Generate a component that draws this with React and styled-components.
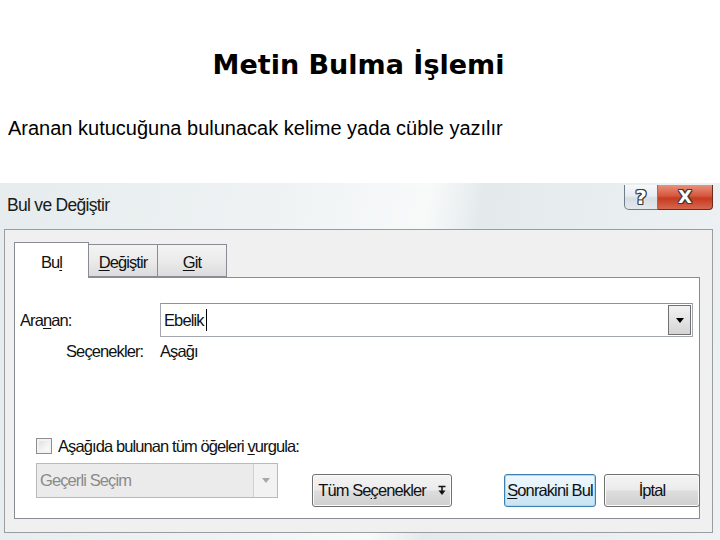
import React from 'react';
import styled, { createGlobalStyle } from 'styled-components';

const GlobalStyle = createGlobalStyle`
  html, body {
    margin: 0;
    padding: 0;
    background: #ffffff;
  }
  body {
    width: 720px;
    height: 540px;
    overflow: hidden;
    font-family: "Liberation Sans", Arial, sans-serif;
  }
`;

const ui = `"Liberation Sans", Arial, sans-serif`;

//Slide
const Slide = styled.div`
  width: 720px;
  height: 540px;
  display: flex;
  flex-direction: column;
`;

const Heading = styled.header`
  height: 183px;
  display: flex;
  flex-direction: column;
`;

const Title = styled.h1`
  margin: 50px 0 0;
  padding-right: 3px;
  font: 700 27px/30px "DejaVu Sans", sans-serif;
  text-align: center;
  color: #000;
`;

const Lead = styled.p`
  margin: 36px 0 0;
  padding-left: 8px;
  font: 400 20px/24px "Liberation Sans", Arial, sans-serif;
  color: #000;
`;

//Dialog window
const Window = styled.section`
  flex: 1;
  display: flex;
  flex-direction: column;
  font-family: ${ui};
  font-size: 16.5px;
  letter-spacing: -0.9px;
  white-space: nowrap;
  color: #111;
  background: linear-gradient(100deg, #e6ecee 0%, #eef2f3 35%, #f8fafa 55%, #e4eaec 62%, #eef2f4 100%);
`;

const TitleBar = styled.div`
  height: 46px;
  display: flex;
  justify-content: space-between;
  align-items: flex-start;
`;

const Caption = styled.span`
  margin: 11px 0 0 7px;
  font-size: 17.5px;
  letter-spacing: -0.7px;
  line-height: 22px;
  color: #1a1a1a;
`;

const CaptionButtons = styled.div`
  display: flex;
  margin: 2px 7px 0 0;
`;

const CaptionButton = styled.div`
  width: ${p => p.$w}px;
  height: 25px;
  box-sizing: border-box;
  display: flex;
  align-items: center;
  justify-content: center;
  padding-bottom: 1px;
  font: 700 ${p => (p.$close ? 18 : 20)}px/1 "DejaVu Sans", sans-serif;
  letter-spacing: 0;
  color: #ffffff;
  text-shadow:
    1px 0 0 #3a3a3a, -1px 0 0 #3a3a3a, 0 1px 0 #3a3a3a, 0 -1px 0 #3a3a3a,
    1px 1px 0 #3a3a3a, -1px -1px 0 #3a3a3a, 1px -1px 0 #3a3a3a, -1px 1px 0 #3a3a3a;
  border: 1px solid ${p => (p.$close ? '#6e2a1c' : '#6f7c89')};
  border-top: none;
  border-radius: ${p => (p.$close ? '0 0 4px 0' : '0 0 0 5px')};
  background: ${p =>
    p.$close
      ? 'linear-gradient(180deg, #e9917c 0%, #d5583f 45%, #c73a20 55%, #d4684f 100%)'
      : 'linear-gradient(180deg, #f6f8fa 0%, #e7ecf0 45%, #d6dde3 55%, #e3e8ec 100%)'};
  ${p => (p.$close ? 'border-left: none;' : '')}
`;

const Frame = styled.div`
  margin: 0 7px 0 4px;
  height: 304px;
  box-sizing: border-box;
  border: 1px solid #9a9da0;
  background: #f0f0f0;
  padding: 12px 12px 13px 9px;
  display: flex;
  flex-direction: column;
`;

const TabStrip = styled.div`
  height: 35px;
  display: flex;
  align-items: flex-end;
  position: relative;
  z-index: 1;
`;

const Tab = styled.div`
  box-sizing: border-box;
  width: ${p => p.$w}px;
  height: ${p => (p.$active ? 36 : 33)}px;
  margin-left: ${p => (p.$first ? 0 : -1)}px;
  margin-bottom: ${p => (p.$active ? -1 : 0)}px;
  border: 1px solid #898c95;
  border-bottom: ${p => (p.$active ? 'none' : '1px solid #898c95')};
  background: ${p => (p.$active ? '#ffffff' : 'linear-gradient(180deg, #f3f3f3 0%, #ebebeb 50%, #dcdcdc 100%)')};
  display: flex;
  justify-content: center;
  align-items: center;
  padding-top: ${p => (p.$active ? 4 : 3)}px;
  z-index: ${p => (p.$active ? 2 : 1)};
`;

const Panel = styled.div`
  flex: 1;
  box-sizing: border-box;
  border: 1px solid #898c95;
  background: #ffffff;
  padding: 25px 6px 11px 5px;
  display: flex;
  flex-direction: column;
`;

const FieldGrid = styled.div`
  display: grid;
  grid-template-columns: 140px 1fr;
  grid-template-rows: 34px 22px;
  row-gap: 3px;
  align-items: center;
`;

const Label = styled.span`
  padding-left: ${p => p.$indent || 0}px;
`;

const ComboBox = styled.div`
  height: 34px;
  box-sizing: border-box;
  border: 1px solid #a3a8b0;
  border-top-color: #8e939b;
  background: #fff;
  display: flex;
  align-items: center;
  padding: 1px;
`;

const ComboText = styled.span`
  flex: 1;
  display: flex;
  align-items: center;
  padding-left: 2px;
`;

const Caret = styled.span`
  width: 1px;
  height: 22px;
  background: #000;
  margin-left: 2px;
`;

const DropButton = styled.div`
  width: 23px;
  height: 30px;
  box-sizing: border-box;
  border: 1px solid #707070;
  background: linear-gradient(180deg, #f2f2f2 0%, #e4e4e4 50%, #d4d4d4 100%);
  display: flex;
  align-items: center;
  justify-content: center;
`;

const Arrow = styled.span`
  width: 0;
  height: 0;
  border-left: 4px solid transparent;
  border-right: 4px solid transparent;
  border-top: 5px solid ${p => p.$color || '#000'};
`;

const Footer = styled.div`
  margin-top: auto;
  display: flex;
  align-items: flex-end;
  padding-left: 16px;
  margin-right: -7px;
`;

const Highlight = styled.div`
  width: 242px;
  display: flex;
  flex-direction: column;
  gap: 7px;
  margin-bottom: 9px;
`;

const CheckRow = styled.label`
  height: 20px;
  display: flex;
  align-items: center;
  gap: 6px;
`;

const CheckBox = styled.span`
  flex: none;
  width: 16px;
  height: 16px;
  box-sizing: border-box;
  border: 1px solid #8f8f8f;
  background: linear-gradient(135deg, #dcdcdc 0%, #f4f4f4 60%, #ffffff 100%);
  box-shadow: inset 0 0 0 2px #f2f2f2;
`;

const DisabledCombo = styled.div`
  width: 242px;
  height: 35px;
  box-sizing: border-box;
  border: 1px solid #b9b9b9;
  background: #ebebeb;
  display: flex;
  align-items: center;
  color: #8a8a8a;
`;

const DisabledText = styled.span`
  flex: 1;
  padding-left: 3px;
`;

const DisabledDrop = styled.div`
  width: 23px;
  align-self: stretch;
  border-left: 1px solid #d2d2d2;
  background: #f2f2f2;
  display: flex;
  align-items: center;
  justify-content: center;
`;

const Button = styled.button`
  flex: none;
  box-sizing: border-box;
  width: ${p => p.$w}px;
  height: 33px;
  margin-left: ${p => p.$gap}px;
  padding: 0;
  border: 1px solid ${p => (p.$default ? '#3c7fb1' : '#707070')};
  border-radius: 3px;
  background: ${p =>
    p.$default
      ? 'linear-gradient(180deg, #eef7fc 0%, #e3f2fb 48%, #d4eaf7 52%, #cae4f3 100%)'
      : 'linear-gradient(180deg, #f4f4f4 0%, #ebebeb 48%, #dddddd 52%, #cfcfcf 100%)'};
  box-shadow: ${p => (p.$default ? 'inset 0 0 0 1px #a9daf5' : 'inset 0 0 0 1px #fbfbfb')};
  font-family: ${ui};
  font-size: 16.5px;
  letter-spacing: -0.9px;
  white-space: nowrap;
  color: #111;
  display: flex;
  align-items: center;
  justify-content: center;
  gap: 12px;
`;

const Key = styled.u`
  text-underline-offset: 2px;
`;

const ExpandIcon = () => (
  <svg width="8" height="11" viewBox="0 0 8 11">
    <path d="M0.5 1.5h7M4 1.5v5" stroke="#111" strokeWidth="1.5" fill="none" />
    <path d="M0.5 5.5h7L4 10z" fill="#111" />
  </svg>
);

export default function App() {
  return (
    <Slide>
      <GlobalStyle />
      <Heading>
        <Title>Metin Bulma İşlemi</Title>
        <Lead>Aranan kutucuğuna bulunacak kelime yada cüble yazılır</Lead>
      </Heading>

      <Window>
        <TitleBar>
          <Caption>Bul ve Değiştir</Caption>
          <CaptionButtons>
            <CaptionButton $w={34}>?</CaptionButton>
            <CaptionButton $w={55} $close>X</CaptionButton>
          </CaptionButtons>
        </TitleBar>

        <Frame>
          <TabStrip>
            <Tab $w={75} $active $first>Bu<Key>l</Key></Tab>
            <Tab $w={70}><Key>D</Key>eğiştir</Tab>
            <Tab $w={70}><Key>G</Key>it</Tab>
          </TabStrip>

          <Panel>
            <FieldGrid>
              <Label>Ara<Key>n</Key>an:</Label>
              <ComboBox>
                <ComboText>Ebelik<Caret /></ComboText>
                <DropButton><Arrow /></DropButton>
              </ComboBox>
              <Label $indent={46}>Seçenekler:</Label>
              <span>Aşağı</span>
            </FieldGrid>

            <Footer>
              <Highlight>
                <CheckRow>
                  <CheckBox />
                  <span>Aşağıda bulunan tüm öğeleri <Key>v</Key>urgula:</span>
                </CheckRow>
                <DisabledCombo>
                  <DisabledText>Geçerli Seçim</DisabledText>
                  <DisabledDrop><Arrow $color="#a8a8a8" /></DisabledDrop>
                </DisabledCombo>
              </Highlight>
              <Button $w={140} $gap={34}>
                <span>Tüm Se<Key>ç</Key>enekler</span>
                <ExpandIcon />
              </Button>
              <Button $w={92} $gap={52} $default><span><Key>S</Key>onrakini Bul</span></Button>
              <Button $w={96} $gap={8}>İptal</Button>
            </Footer>
          </Panel>
        </Frame>
      </Window>
    </Slide>
  );
}
